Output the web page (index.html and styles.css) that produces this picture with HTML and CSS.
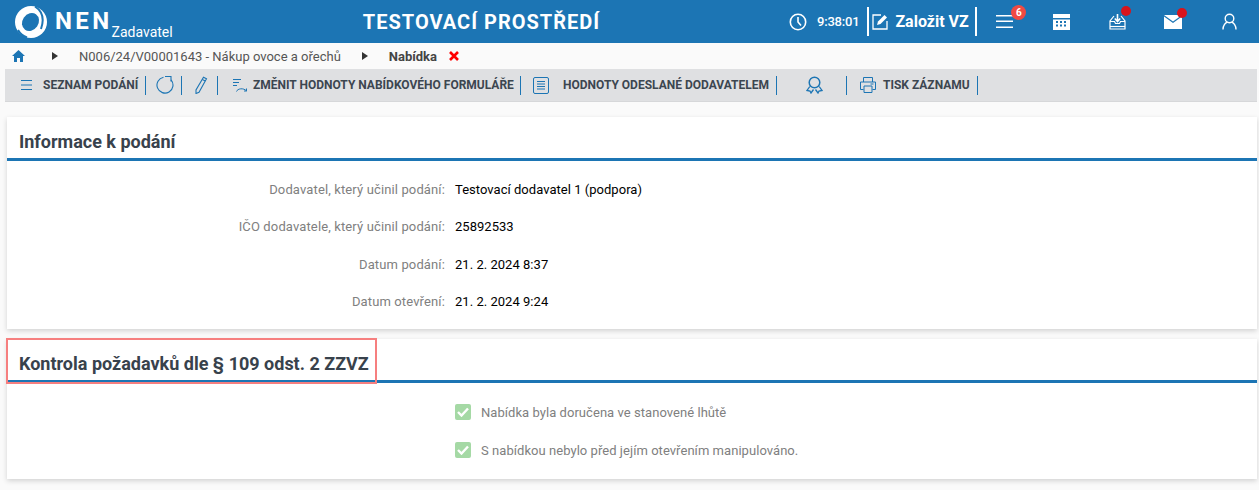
FILE: index.html
```html
<!DOCTYPE html>
<html lang="cs">
<head>
  <meta charset="UTF-8">
  <title>Informace k podání</title>
  <link rel="stylesheet" href="styles.css">
</head>
<body>

  <header class="topbar">
    <div class="brand">
      <svg class="brand-logo" width="32" height="32" viewBox="0 0 32 32">
        <circle cx="16" cy="16" r="16" fill="#fff"/>
        <ellipse cx="15.500" cy="16" rx="8" ry="9.500" transform="rotate(35 15.500 16)" fill="#1c75b4"/>
        <path d="M20 0.500C27 5 29.500 13 26 23" fill="none" stroke="#1c75b4" stroke-width="2"/>
        <path d="M12 31.500C8 30 5 27.500 3 24" fill="none" stroke="#1c75b4" stroke-width="2"/>
      </svg>
      <span class="brand-name">NEN</span>
      <span class="brand-role">Zadavatel</span>
    </div>
    <div class="env-title">TESTOVACÍ PROSTŘEDÍ</div>
    <div class="top-tools">
      <svg class="clock" width="18" height="18" viewBox="0 0 18 18" fill="none" stroke="#fff" stroke-width="1.600">
        <circle cx="9" cy="9" r="7.700"/>
        <path d="M9 4v5l3 3.500"/>
      </svg>
      <span class="time">9:38:01</span>
      <div class="create">
        <svg width="17" height="17" viewBox="0 0 17 17" fill="none" stroke="#fff" stroke-width="1.300">
          <path d="M9 2H1v14h14V8"/>
          <path d="M5 12l1-3.500L12.500 2 15 4.500 8.500 11z" fill="#fff" stroke="none"/>
        </svg>
        <span>Založit VZ</span>
      </div>
      <div class="top-icon">
        <svg width="18" height="15" viewBox="0 0 18 15" fill="#fff">
          <rect y="1" width="17" height="1.500"/>
          <rect y="6.500" width="17" height="1.500"/>
          <rect y="12.500" width="17" height="1.500"/>
        </svg>
        <span class="badge">6</span>
      </div>
      <div class="top-icon">
        <svg width="17" height="16" viewBox="0 0 17 16" fill="#fff">
          <path d="M0 0h17v16H0zM0 4v1.500h17V4zM3 7v2h2V7zm4 0v2h2V7zm4 0v2h2V7zm-8 3.500v2h2v-2zm4 0v2h2v-2zm4 0v2h2v-2z" fill-rule="evenodd"/>
        </svg>
      </div>
      <div class="top-icon">
        <svg width="17" height="17" viewBox="0 0 17 17" fill="none" stroke="#fff" stroke-width="1.200">
          <path d="M5 3L1 8v8h15V8l-4-5"/>
          <path d="M1 8.500h4.500l1 2h4l1-2H16"/>
          <path d="M1 13.500h15"/>
          <path d="M8.500 1v7M5.800 5.500l2.700 3 2.700-3" stroke-width="1.600"/>
        </svg>
        <span class="dot"></span>
      </div>
      <div class="top-icon">
        <svg width="18" height="14" viewBox="0 0 18 14" fill="#fff">
          <path d="M0 0h18L9 6.500z"/>
          <path d="M0 1.500l9 6.500 9-6.500V14H0z"/>
        </svg>
        <span class="dot"></span>
      </div>
      <div class="top-icon">
        <svg width="15" height="17" viewBox="0 0 15 17" fill="none" stroke="#fff" stroke-width="1.400">
          <circle cx="7.500" cy="5.500" r="4.300"/>
          <path d="M1 16.500c0-4 2.500-7 4.500-7.500M14 16.500c0-4-2.500-7-4.500-7.500"/>
        </svg>
      </div>
    </div>
  </header>

  <nav class="crumbs">
    <svg class="home" width="13" height="12" viewBox="0 0 13 12" fill="#1c75b4">
      <path d="M6.500 0L13 6h-2v6H8V8H5v4H2V6H0z"/>
    </svg>
    <span class="crumb-arrow"></span>
    <span class="crumb">N006/24/V00001643 - Nákup ovoce a ořechů</span>
    <span class="crumb-arrow second"></span>
    <span class="crumb current">Nabídka</span>
    <svg class="close" width="10" height="10" viewBox="0 0 10 10" stroke="#f00" stroke-width="2.600">
      <path d="M1 1l8 8M9 1l-8 8"/>
    </svg>
  </nav>

  <div class="toolbar">
    <div class="tool tool-list">
      <svg width="12" height="12" viewBox="0 0 12 12" fill="#1c75b4">
        <rect y="1" width="11" height="1"/><rect y="5.500" width="11" height="1"/><rect y="10" width="11" height="1"/>
      </svg>
      <span>SEZNAM PODÁNÍ</span>
    </div>
    <div class="tool tool-icon">
      <svg width="18" height="18" viewBox="0 0 18 18" fill="none" stroke="#1c75b4" stroke-width="1.100">
        <path d="M15 3.800A8 8 0 1 1 7.500 1.200"/>
        <path d="M9 0.500h6v5"/>
      </svg>
    </div>
    <div class="tool tool-icon">
      <svg width="14" height="18" viewBox="0 0 14 18" fill="none" stroke="#1c75b4" stroke-width="1.100">
        <path d="M9.500 1.200l3 1.600L5 16.200l-3 1.300L2 14z"/>
        <path d="M8.300 3.500l3 1.600"/>
      </svg>
    </div>
    <div class="tool tool-change">
      <svg width="15" height="15" viewBox="0 0 15 15" fill="none" stroke="#1c75b4" stroke-width="1">
        <path d="M0 1.500h8M0 4.500h6M0 7.500h4"/>
        <path d="M3.500 13.500c1-3 7-4 10 -.5M13.500 10.500v2.500h-2.500"/>
      </svg>
      <span>ZMĚNIT HODNOTY NABÍDKOVÉHO FORMULÁŘE</span>
    </div>
    <div class="tool tool-sent">
      <svg width="16" height="17" viewBox="0 0 16 17" fill="none" stroke="#1c75b4" stroke-width="1">
        <rect x="0.500" y="0.500" width="15" height="16" rx="1.500"/>
        <path d="M4 4.500h8M4 7h8M4 9.500h8M4 12h8"/>
      </svg>
      <span>HODNOTY ODESLANÉ DODAVATELEM</span>
    </div>
    <div class="tool tool-award">
      <svg width="17" height="18" viewBox="0 0 17 18" fill="none" stroke="#1c75b4" stroke-width="1.500">
        <circle cx="8.500" cy="6.500" r="5.300"/>
        <path d="M3.800 10.500L1 14.500l3 .5 1 2 2.500-3.500M13.200 10.500l2.800 4-3 .5-1 2-2.500-3.500" stroke-width="1.300"/>
      </svg>
    </div>
    <div class="tool tool-print">
      <svg width="16" height="16" viewBox="0 0 16 16" fill="none" stroke="#1c75b4" stroke-width="1">
        <path d="M3.500 5V.500h9V5M3.500 12.500H.5V5h15v7.500h-3"/>
        <path d="M4 9h8v6.500H4z"/>
        <path d="M10.500 7h3"/>
      </svg>
      <span>TISK ZÁZNAMU</span>
    </div>
  </div>

  <main class="content">
    <section class="card card-info">
      <h2 class="card-title">Informace k podání</h2>
      <dl class="fields">
        <dt>Dodavatel, který učinil podání:</dt>
        <dd>Testovací dodavatel 1 (podpora)</dd>
        <dt>IČO dodavatele, který učinil podání:</dt>
        <dd>25892533</dd>
        <dt>Datum podání:</dt>
        <dd>21. 2. 2024 8:37</dd>
        <dt>Datum otevření:</dt>
        <dd>21. 2. 2024 9:24</dd>
      </dl>
    </section>

    <section class="card card-check">
      <h2 class="card-title">Kontrola požadavků dle § 109 odst. 2 ZZVZ</h2>
      <div class="highlight"></div>
      <ul class="checks">
        <li>
          <span class="checkbox"><svg width="12" height="10" viewBox="0 0 12 10" fill="none" stroke="#fff" stroke-width="2.400"><path d="M1 5l3.500 3.500L11 1.500"/></svg></span>
          Nabídka byla doručena ve stanovené lhůtě
        </li>
        <li>
          <span class="checkbox"><svg width="12" height="10" viewBox="0 0 12 10" fill="none" stroke="#fff" stroke-width="2.400"><path d="M1 5l3.500 3.500L11 1.500"/></svg></span>
          S nabídkou nebylo před jejím otevřením manipulováno.
        </li>
      </ul>
    </section>
  </main>

</body>
</html>
```

FILE: styles.css
```css
* {
  box-sizing: border-box;
}
html, body {
  height: 490px;
  overflow: hidden;
}
body {
  margin: 0;
  background: #fafafa;
  font-family: Roboto, "Liberation Sans", sans-serif;
  font-size: 13px;
  color: #000;
}

/* top blue bar */
.topbar {
  height: 43px;
  background: #1c75b4;
  color: #fff;
  display: flex;
  align-items: center;
}
.brand {
  width: 260px;
  display: flex;
  align-items: center;
  padding-left: 15px;
}
.brand-name {
  margin-left: 8px;
  font-size: 24px;
  font-weight: 700;
  letter-spacing: 3.4px;
  line-height: 43px;
  height: 43px;
}
.brand-role {
  margin: 21px 0 0 -1px;
  font-size: 14px;
}
.env-title {
  width: 443px;
  text-align: center;
  font-size: 20px;
  font-weight: 700;
  letter-spacing: 1px;
}
.top-tools {
  flex: 1;
  display: flex;
  align-items: center;
  padding-left: 86px;
}
.time {
  margin-left: 10px;
  font-size: 13px;
  font-weight: 500;
  letter-spacing: -0.2px;
}
.create {
  margin-left: 8px;
  height: 29px;
  width: 110px;
  border-left: 2px solid #fff;
  border-right: 2px solid #fff;
  display: flex;
  align-items: center;
  gap: 6px;
  padding-left: 3px;
  font-size: 16px;
  font-weight: 700;
}
.top-icon {
  position: relative;
  width: 56px;
  display: flex;
  justify-content: center;
}
.badge {
  position: absolute;
  top: -9px;
  left: 34px;
  width: 15px;
  height: 15px;
  border-radius: 50%;
  background: #f04a43;
  font-size: 10px;
  font-weight: 700;
  line-height: 15px;
  text-align: center;
}
.dot {
  position: absolute;
  top: -7px;
  left: 32px;
  width: 10px;
  height: 10px;
  border-radius: 50%;
  background: #d8141c;
}

/* breadcrumb */
.crumbs {
  height: 26px;
  display: flex;
  align-items: center;
  padding-left: 12px;
  color: #555;
}
.crumb-arrow {
  margin-left: 27px;
  border-left: 6px solid #333;
  border-top: 4px solid transparent;
  border-bottom: 4px solid transparent;
}
.crumb-arrow.second {
  margin-left: 21px;
}
.crumb {
  margin-left: 21px;
}
.crumb.current {
  font-weight: 700;
  color: #444;
}
.close {
  margin-left: 12px;
}

/* toolbar */
.toolbar {
  margin: 0 2px 0 5px;
  height: 33px;
  background: #dfe0e2;
  display: flex;
  align-items: center;
  border-bottom: 1px solid #d6d7d9;
  color: #3c4650;
  font-size: 12px;
  font-weight: 700;
}
.tool {
  height: 19px;
  display: flex;
  align-items: center;
  flex: none;
}
.tool-list {
  width: 141px;
  padding-left: 16px;
  gap: 10px;
  border-right: 1px solid #1c75b4;
}
.tool-icon {
  width: 36px;
  padding-left: 3px;
  justify-content: center;
  border-right: 1px solid #1c75b4;
}
.tool-change {
  width: 303px;
  padding-left: 15px;
  gap: 5px;
  border-right: 1px solid #1c75b4;
}
.tool-sent {
  width: 256px;
  padding-left: 12px;
  gap: 14px;
  border-right: 1px solid #1c75b4;
}
.tool-award {
  width: 70px;
  padding-left: 29px;
  border-right: 1px solid #1c75b4;
}
.tool-print {
  width: 131px;
  padding-left: 13px;
  gap: 7px;
  border-right: 1px solid #1c75b4;
}

/* cards */
.content {
  padding: 15px 2px 0 7px;
}
.card {
  position: relative;
  background: #fff;
  box-shadow: 0 2px 5px rgba(0, 0, 0, 0.16);
  margin-bottom: 10px;
}
.card-info {
  height: 212px;
}
.card-check {
  height: 140px;
}
.card-title {
  margin: 0;
  height: 44px;
  padding: 13px 0 0 12px;
  border-bottom: 3px solid #1c75b4;
  color: #38424c;
  font-size: 18px;
  line-height: 24px;
  font-weight: 700;
}
.highlight {
  position: absolute;
  left: -1px;
  top: -1px;
  width: 371px;
  height: 46px;
  border: 2px solid #f67f7f;
}
.fields {
  margin: 0;
  padding-top: 10px;
  display: grid;
  grid-template-columns: 438px 1fr;
  grid-auto-rows: 37.300px;
  align-items: center;
}
.fields dt {
  text-align: right;
  color: #808080;
  letter-spacing: 0.13px;
}
.fields dd {
  margin: 0 0 0 10px;
  letter-spacing: 0.03px;
}
.checks {
  margin: 0;
  padding: 10px 0 0 448px;
  list-style: none;
  color: #808080;
  letter-spacing: 0.05px;
}
.checks li {
  height: 38px;
  display: flex;
  align-items: center;
  gap: 10px;
}
.checkbox {
  width: 16px;
  height: 16px;
  border-radius: 2px;
  background: #a5d9a5;
  display: flex;
  align-items: center;
  justify-content: center;
}
```
